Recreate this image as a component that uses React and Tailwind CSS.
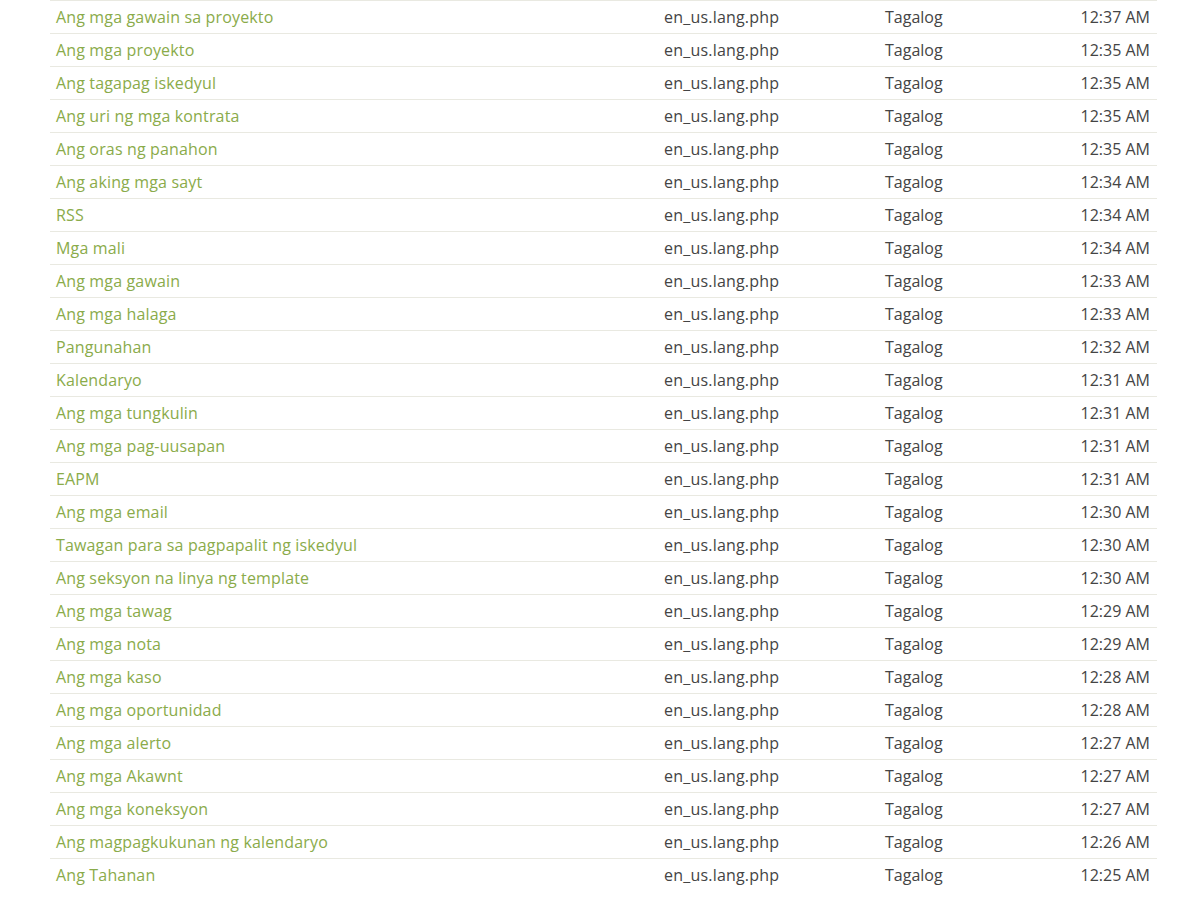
const rows = [
  ["Ang mga gawain sa proyekto", "12:37 AM"],
  ["Ang mga proyekto", "12:35 AM"],
  ["Ang tagapag iskedyul", "12:35 AM"],
  ["Ang uri ng mga kontrata", "12:35 AM"],
  ["Ang oras ng panahon", "12:35 AM"],
  ["Ang aking mga sayt", "12:34 AM"],
  ["RSS", "12:34 AM"],
  ["Mga mali", "12:34 AM"],
  ["Ang mga gawain", "12:33 AM"],
  ["Ang mga halaga", "12:33 AM"],
  ["Pangunahan", "12:32 AM"],
  ["Kalendaryo", "12:31 AM"],
  ["Ang mga tungkulin", "12:31 AM"],
  ["Ang mga pag-uusapan", "12:31 AM"],
  ["EAPM", "12:31 AM"],
  ["Ang mga email", "12:30 AM"],
  ["Tawagan para sa pagpapalit ng iskedyul", "12:30 AM"],
  ["Ang seksyon na linya ng template", "12:30 AM"],
  ["Ang mga tawag", "12:29 AM"],
  ["Ang mga nota", "12:29 AM"],
  ["Ang mga kaso", "12:28 AM"],
  ["Ang mga oportunidad", "12:28 AM"],
  ["Ang mga alerto", "12:27 AM"],
  ["Ang mga Akawnt", "12:27 AM"],
  ["Ang mga koneksyon", "12:27 AM"],
  ["Ang magpagkukunan ng kalendaryo", "12:26 AM"],
  ["Ang Tahanan", "12:25 AM"]
];

export default function App() {
  return (
    <div className="min-h-[911px] bg-white pl-[50px] pr-[42px] font-['Open_Sans',sans-serif] text-[16px] text-[#444]">
      <table className="w-full border-collapse">
        <tbody>
          {rows.map(([name, time], i) => (
            <tr key={i} className="border-t border-[#e9e9e1]">
              <td className="h-[33px] w-[608px] px-[6px] align-middle leading-[22px] tracking-[0.15px] text-[#8aab4a]">
                <a href="#">{name}</a>
              </td>
              <td className="w-[221px] px-[6px] align-middle tracking-[0.2px]">en_us.lang.php</td>
              <td className="px-[6px] align-middle">Tagalog</td>
              <td className="pr-[7px] text-right align-middle">{time}</td>
            </tr>
          ))}
        </tbody>
      </table>
    </div>
  );
}
